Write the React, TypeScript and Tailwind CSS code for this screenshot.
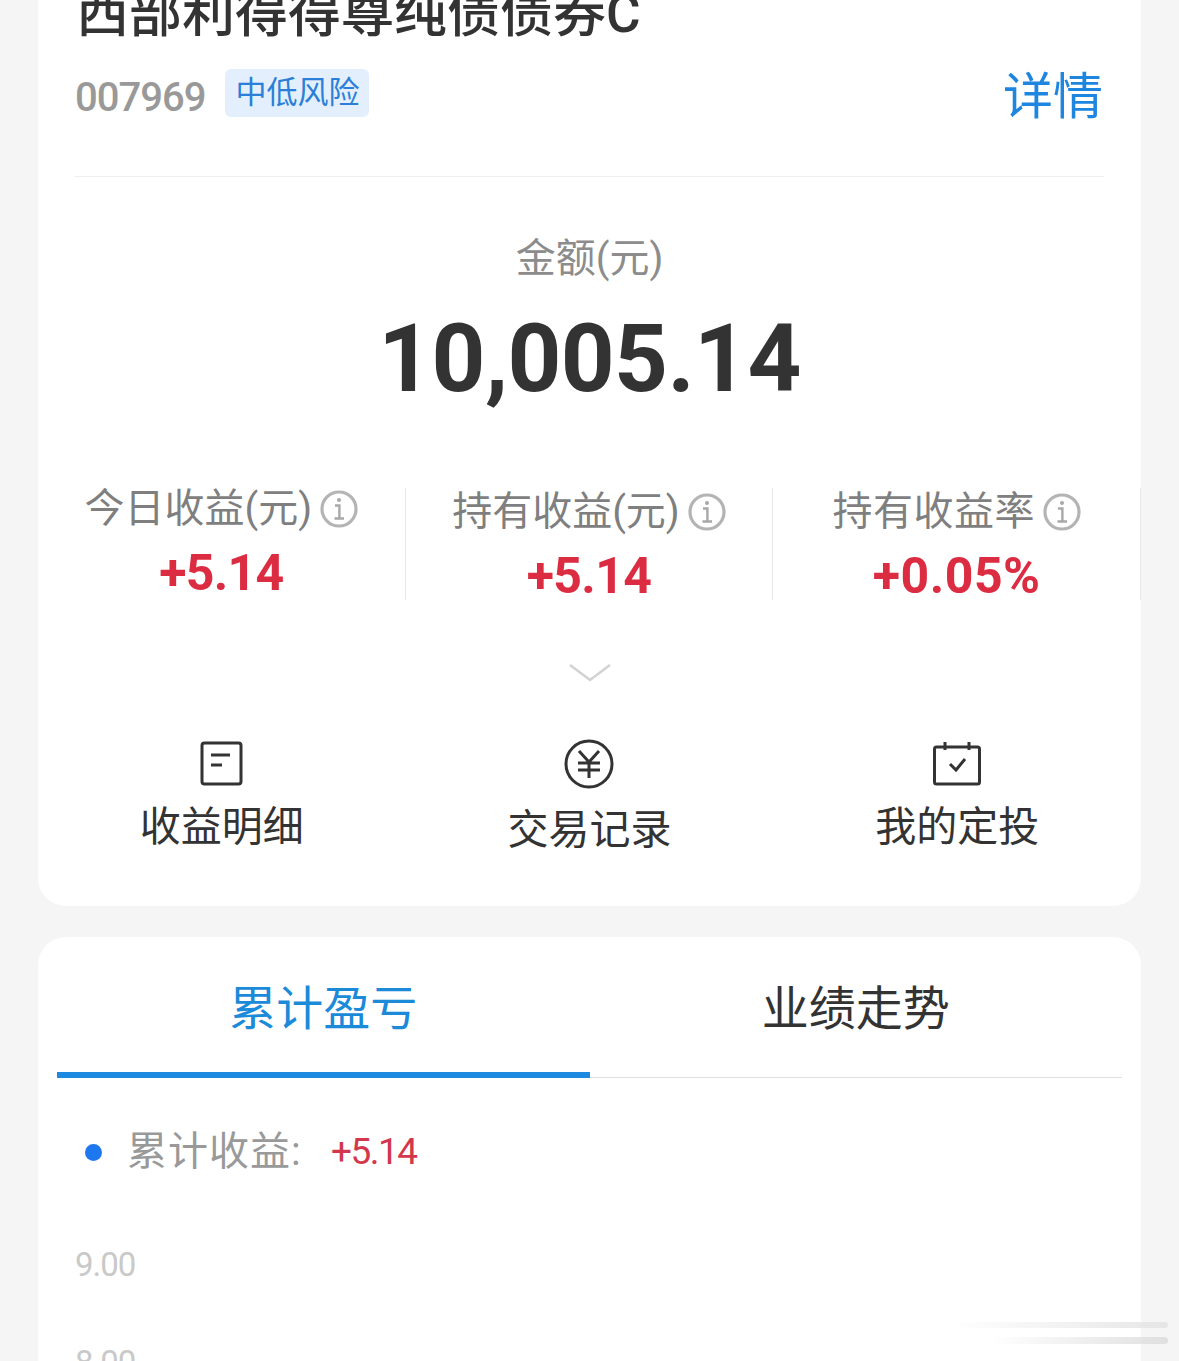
const cjk = "font-['Roboto','Noto_Sans_CJK_SC',sans-serif]";

function Info() {
  return (
    <svg width="38" height="38" viewBox="0 0 38 38" fill="none">
      <circle cx="19" cy="19" r="17" stroke="#b4b4b4" strokeWidth="3.2" />
      <circle cx="19" cy="10" r="2" fill="#a8a8a8" />
      <path d="M15 15.5h4.4v13M14.5 28.5h9.5" stroke="#a8a8a8" strokeWidth="2.4" />
    </svg>
  );
}

function Stat({ label, value, lift, tracking, labelClass = "" }: { label: string; value: string; lift?: boolean; tracking: string; labelClass?: string }) {
  return (
    <div className="flex h-[112px] flex-col items-center border-r border-[#e8e8e8]">
      <div className={`flex h-[40px] items-center gap-[8px] ${lift ? "mt-[1px]" : "mt-[4px]"}`}>
        <span className={`whitespace-nowrap text-[40px] leading-[40px] text-[#7f7f7f] ${labelClass}`}>{label}</span>
        <Info />
      </div>
      <div className={`mt-[16px] text-[50px] leading-[56px] font-bold text-[#dc2c41] ${tracking}`}>{value}</div>
    </div>
  );
}

function Action({ icon, label, low }: { icon: React.ReactNode; label: string; low?: boolean }) {
  return (
    <div className="flex flex-col items-center">
      <div className="flex h-[50px] items-center justify-center">{icon}</div>
      <div className={`${low ? "mt-[17px]" : "mt-[14px]"} whitespace-nowrap text-[41px] leading-[48px] text-[#333]`}>{label}</div>
    </div>
  );
}

export default function App() {
  return (
    <div className={`relative h-[1361px] w-[1179px] overflow-hidden bg-[#f5f5f5] ${cjk}`}>
      <div className="mx-[38px] flow-root h-[906px] rounded-b-[28px] bg-white">
        <div className="-mt-[8px] ml-[38px] h-[44px] whitespace-nowrap text-[53px] leading-[44px] font-medium text-[#333]">西部利得得尊纯债债券C</div>
        <div className="mx-[37px] mt-[33px] flex h-[108px] items-start justify-between border-b border-[#eeeeee]">
          <div className="flex items-start gap-[20px]">
            <span className="mt-[5px] text-[40px] leading-[48px] font-medium tracking-[-1px] text-[#999]">007969</span>
            <span className="h-[48px] rounded-[6px] bg-[#e3effc] px-[10px] text-[31px] leading-[48px] text-[#2b7fd9]">中低风险</span>
          </div>
          <span className="mr-[1px] mt-[3px] text-[50px] leading-[50px] text-[#1f86e0]">详情</span>
        </div>
        <div className="mt-[59px] text-center text-[40px] leading-[46px] text-[#8c8c8c]">金额(元)</div>
        <div className="mt-[22px] text-center text-[94px] leading-[110px] font-bold tracking-[-0.6px] text-[#333]">10,005.14</div>
        <div className="mt-[74px] grid grid-cols-3">
          <Stat label="今日收益(元)" value="+5.14" lift tracking="tracking-[-0.7px]" />
          <Stat label="持有收益(元)" value="+5.14" tracking="tracking-[-0.7px]" />
          <Stat label="持有收益率" value="+0.05%" tracking="tracking-[0.5px]" labelClass="tracking-[0.5px]" />
        </div>
        <div className="mt-[63px] flex justify-center">
          <svg width="44" height="20" viewBox="0 0 44 20" fill="none">
            <path d="M2 2l20 15L42 2" stroke="#d2d2d2" strokeWidth="2.5" />
          </svg>
        </div>
        <div className="mt-[56px] grid grid-cols-3">
          <Action
            label="收益明细"
            icon={
              <svg width="44" height="46" viewBox="0 0 44 46" fill="none" stroke="#333">
                <rect x="2" y="2" width="39" height="41" rx="2.5" strokeWidth="3" />
                <path d="M11 14h19M11 24h11" strokeWidth="3" />
              </svg>
            }
          />
          <Action
            low
            label="交易记录"
            icon={
              <svg width="50" height="50" viewBox="0 0 50 50" fill="none" stroke="#333" strokeWidth="3">
                <circle cx="25" cy="25" r="23" />
                <path d="M15 12l10 11 10-11M14 24h22M14 31h22M25 23v16" />
              </svg>
            }
          />
          <Action
            label="我的定投"
            icon={
              <svg width="48" height="46" viewBox="0 0 48 46" fill="none" stroke="#333" strokeWidth="3">
                <rect x="1.5" y="6" width="45" height="37" rx="2" />
                <path d="M12 1v8M36 1v8M17 23l6 6 9-11" />
              </svg>
            }
          />
        </div>
      </div>

      <div className="mx-[38px] mt-[31px] h-[500px] rounded-t-[28px] bg-white px-[19px]">
        <div className="grid h-[141px] grid-cols-2 border-b border-[#dedede]">
          <div className="-mb-px flex h-[141px] items-start justify-center border-b-[6px] border-[#1b8ae0] pt-[45px]">
            <span className="text-[47px] leading-[54px] text-[#1b8ad8]">累计盈亏</span>
          </div>
          <div className="flex items-start justify-center pt-[45px]">
            <span className="text-[47px] leading-[54px] text-[#333]">业绩走势</span>
          </div>
        </div>
        <div className="mt-[52px] flex h-[44px] items-center pl-[28px]">
          <span className="h-[17px] w-[17px] rounded-full bg-[#1d78f0]" />
          <span className="ml-[25px] w-[204px] text-[40px] leading-[44px] tracking-[1px] text-[#999]">累计收益:</span>
          <span className="text-[37px] leading-[44px] tracking-[-1.5px] text-[#d2374b]">+5.14</span>
        </div>
        <div className="mt-[71px] pl-[18px] text-[33px] leading-[40px] tracking-[-1px] text-[#c9c9c9]">9.00</div>
        <div className="mt-[58px] pl-[18px] text-[33px] leading-[40px] tracking-[-1px] text-[#c9c9c9]">8.00</div>
      </div>

      <div className="absolute left-[950px] top-[1322px] h-[6px] w-[218px] rounded-full bg-gradient-to-r from-transparent to-[#e6e6e6]" />
      <div className="absolute left-[990px] top-[1337px] h-[7px] w-[178px] rounded-full bg-gradient-to-r from-transparent to-[#e0e0e0]" />
    </div>
  );
}
